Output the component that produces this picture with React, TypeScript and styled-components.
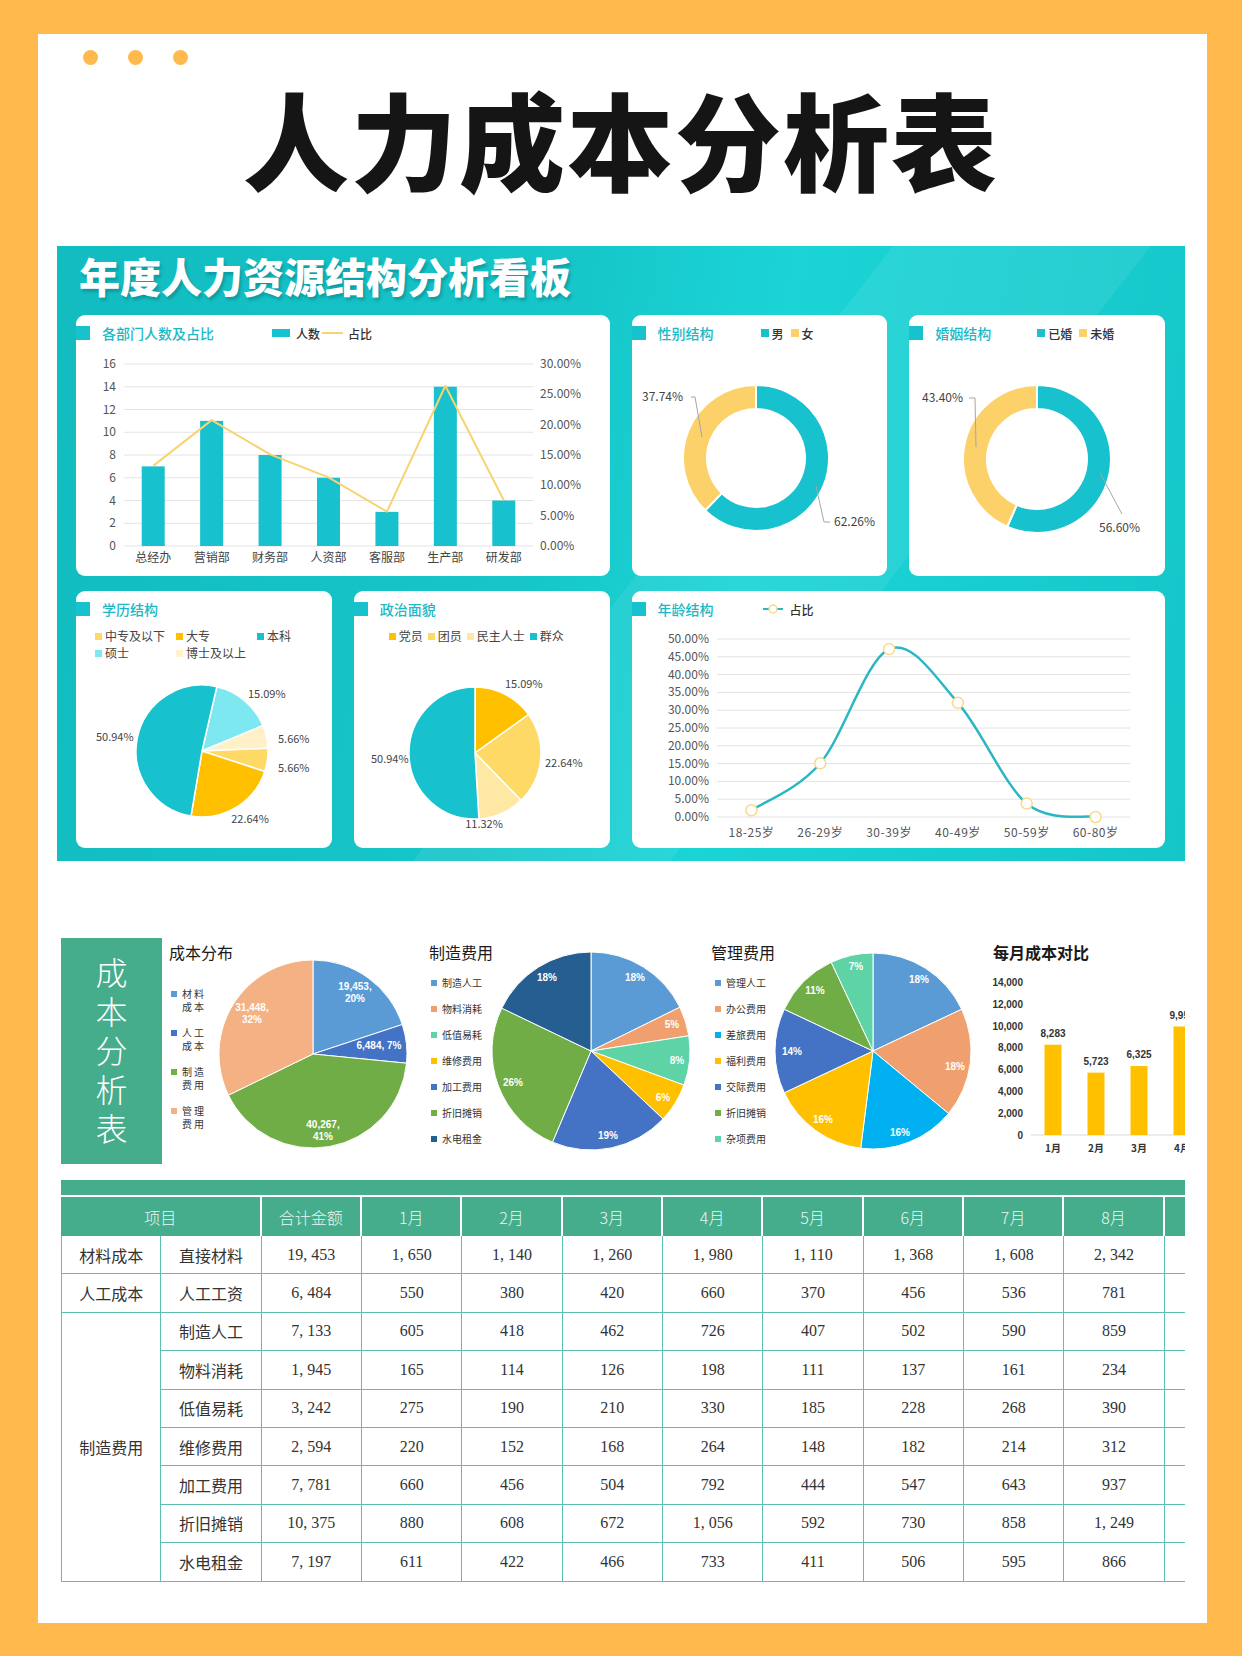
import React from 'react';
import styled, { createGlobalStyle } from 'styled-components';

const TEAL = '#17C1CD';
const SUN = '#FDD169';
const GREEN = '#45AC8C';
const RULE = '#5FBFAE';

const GlobalStyle = createGlobalStyle`
  html, body { margin: 0; padding: 0; }
  body {
    background: #FFB94C;
    font-family: "Noto Sans CJK SC", "Noto Sans", sans-serif;
  }
`;

const Page = styled.div`
  width: 1242px;
  height: 1656px;
  box-sizing: border-box;
  padding: 34px 35px 33px 38px;
  background: #FFB94C;
`;

const Card = styled.div`
  height: 100%;
  box-sizing: border-box;
  background: #fff;
  padding: 0 22px 0 19px;
  overflow: hidden;
`;

const Dots = styled.div`
  display: flex;
  gap: 30px;
  padding: 16px 0 0 26px;
`;

const Dot = styled.span`
  width: 15px;
  height: 15px;
  border-radius: 50%;
  background: #FFB94C;
`;

const Title = styled.h1`
  margin: 19px 0 0;
  text-align: center;
  font-size: 106px;
  line-height: 106px;
  font-weight: 900;
  color: #151515;
  letter-spacing: 2px;
`;

/* ---------- dashboard ---------- */

const Board = styled.section`
  margin-top: 56px;
  height: 615px;
  box-sizing: border-box;
  padding: 0 20px 13px 19px;
  background:
    linear-gradient(128deg, transparent 52%, rgba(255, 255, 255, 0.07) 52%, rgba(255, 255, 255, 0.07) 68%, transparent 68%),
    linear-gradient(100deg, #12BCC0 0%, #16C6C9 42%, #1BD4D6 60%, #15C6C9 100%);
  display: flex;
  flex-direction: column;
`;

const BoardTitle = styled.h2`
  margin: 0;
  height: 69px;
  box-sizing: border-box;
  padding: 9px 0 0 3px;
  font-size: 41px;
  line-height: 41px;
  font-weight: 900;
  color: #fff;
  text-shadow: 2px 3px 3px rgba(0, 90, 100, 0.35);
`;

const PanelGrid = styled.div`
  display: grid;
  grid-template-columns: repeat(4, 1fr);
  grid-template-rows: 261px 257px;
  column-gap: 22px;
  row-gap: 15px;
`;

const Panel = styled.div<{ $span?: number }>`
  grid-column: span ${(p) => p.$span ?? 1};
  background: #fff;
  border-radius: 9px;
  overflow: hidden;
  display: flex;
  flex-direction: column;
`;

const PanelHead = styled.div`
  height: 36px;
  flex-shrink: 0;
  display: flex;
  align-items: center;
`;

const Marker = styled.span`
  width: 14px;
  height: 14px;
  flex-shrink: 0;
  background: ${TEAL};
`;

const PanelTitle = styled.span<{ $w: number }>`
  width: ${(p) => p.$w}px;
  margin-left: 12px;
  flex-shrink: 0;
  font-size: 14px;
  font-weight: 500;
  color: #1DB8C6;
  white-space: nowrap;
`;

const HeadLegend = styled.div<{ $gap?: number }>`
  display: flex;
  align-items: center;
  gap: ${(p) => p.$gap ?? 7}px;
  font-size: 12px;
  color: #333;
  font-weight: 500;
`;

const LegendItem = styled.span`
  display: inline-flex;
  align-items: center;
  white-space: nowrap;
`;

const Swatch = styled.i<{ $c: string; $w?: number; $h?: number; $gap?: number }>`
  display: inline-block;
  width: ${(p) => p.$w ?? 8}px;
  height: ${(p) => p.$h ?? 8}px;
  margin-right: ${(p) => p.$gap ?? 3}px;
  background: ${(p) => p.$c};
`;

const SubLegend = styled.div<{ $cols?: number; $left: number }>`
  height: 36px;
  flex-shrink: 0;
  box-sizing: border-box;
  padding: 1px 0 0 ${(p) => p.$left}px;
  display: ${(p) => (p.$cols ? 'grid' : 'flex')};
  grid-template-columns: repeat(${(p) => p.$cols ?? 1}, 76px);
  align-content: start;
  align-items: flex-start;
  column-gap: 5px;
  row-gap: 1px;
  font-size: 12px;
  line-height: 16px;
  color: #444;
`;

const ChartSvg = styled.svg`
  display: block;
  flex-shrink: 0;
  overflow: visible;
  font-family: "Noto Sans CJK SC", sans-serif;
`;

const T = styled.text<{ $size?: number; $bold?: boolean; $fill?: string; $sans?: boolean }>`
  font-size: ${(p) => p.$size ?? 12}px;
  font-weight: ${(p) => (p.$bold ? 700 : 400)};
  fill: ${(p) => p.$fill ?? '#555'};
  font-family: ${(p) => (p.$sans ? '"Liberation Sans", Arial, sans-serif' : '"Noto Sans CJK SC", sans-serif')};
`;

/* ---------- geometry helpers ---------- */

const pt = (cx: number, cy: number, r: number, a: number): [number, number] => {
  const t = (a * Math.PI) / 180;
  return [cx + r * Math.sin(t), cy - r * Math.cos(t)];
};

const wedge = (cx: number, cy: number, r: number, ri: number, a0: number, a1: number) => {
  const lg = a1 - a0 > 180 ? 1 : 0;
  const [x0, y0] = pt(cx, cy, r, a0);
  const [x1, y1] = pt(cx, cy, r, a1);
  if (!ri) return `M${cx} ${cy} L${x0} ${y0} A${r} ${r} 0 ${lg} 1 ${x1} ${y1} Z`;
  const [x2, y2] = pt(cx, cy, ri, a1);
  const [x3, y3] = pt(cx, cy, ri, a0);
  return `M${x0} ${y0} A${r} ${r} 0 ${lg} 1 ${x1} ${y1} L${x2} ${y2} A${ri} ${ri} 0 ${lg} 0 ${x3} ${y3} Z`;
};

type Slice = { v: number; c: string };

const Pie = ({ cx, cy, r, ri = 0, start = 0, slices, sw = 1.5 }: { cx: number; cy: number; r: number; ri?: number; start?: number; slices: Slice[]; sw?: number }) => {
  const total = slices.reduce((s, x) => s + x.v, 0);
  let a = start;
  return (
    <g>
      {slices.map((s, i) => {
        const a0 = a;
        const a1 = a + (s.v / total) * 360;
        a = a1;
        return <path key={i} d={wedge(cx, cy, r, ri, a0, a1)} fill={s.c} stroke="#fff" strokeWidth={sw} strokeLinejoin="round" />;
      })}
    </g>
  );
};

const smooth = (pts: [number, number][]) => {
  let d = `M${pts[0][0]} ${pts[0][1]}`;
  for (let i = 0; i < pts.length - 1; i++) {
    const p0 = pts[i - 1] ?? pts[i];
    const p1 = pts[i];
    const p2 = pts[i + 1];
    const p3 = pts[i + 2] ?? p2;
    const c1 = [p1[0] + (p2[0] - p0[0]) / 6, p1[1] + (p2[1] - p0[1]) / 6];
    const c2 = [p2[0] - (p3[0] - p1[0]) / 6, p2[1] - (p3[1] - p1[1]) / 6];
    d += ` C${c1[0]} ${c1[1]} ${c2[0]} ${c2[1]} ${p2[0]} ${p2[1]}`;
  }
  return d;
};

/* ---------- dashboard charts ---------- */

const depts = [
  { name: '总经办', n: 7 },
  { name: '营销部', n: 11 },
  { name: '财务部', n: 8 },
  { name: '人资部', n: 6 },
  { name: '客服部', n: 3 },
  { name: '生产部', n: 14 },
  { name: '研发部', n: 4 },
];

const DeptChart = () => {
  const L = 48, R = 457, TOP = 13, B = 195;
  const H = B - TOP;
  const step = (R - L) / depts.length;
  const total = depts.reduce((s, d) => s + d.n, 0);
  const yN = (v: number) => B - (v / 16) * H;
  const yP = (p: number) => B - (p / 30) * H;
  const line = depts.map((d, i) => `${L + step * (i + 0.5)},${yP((d.n / total) * 100)}`).join(' ');
  return (
    <ChartSvg width={534} height={225}>
      {[0, 2, 4, 6, 8, 10, 12, 14, 16].map((v) => (
        <g key={v}>
          <line x1={L} x2={R} y1={yN(v)} y2={yN(v)} stroke="#E4E4E4" strokeWidth={1} />
          <T x={40} y={yN(v) + 4} textAnchor="end">{v}</T>
        </g>
      ))}
      {[0, 5, 10, 15, 20, 25, 30].map((p) => (
        <T key={p} x={464} y={yP(p) + 4}>{p.toFixed(2)}%</T>
      ))}
      {depts.map((d, i) => (
        <rect key={d.name} x={L + step * (i + 0.5) - 11.5} y={yN(d.n)} width={23} height={B - yN(d.n)} fill={TEAL} />
      ))}
      <polyline points={line} fill="none" stroke="#F7D372" strokeWidth={2} strokeLinejoin="round" />
      {depts.map((d, i) => (
        <T key={d.name} x={L + step * (i + 0.5)} y={211} textAnchor="middle" $fill="#444">{d.name}</T>
      ))}
    </ChartSvg>
  );
};

type DonutLabel = { text: string; x: number; y: number; lead: string };

const DonutChart = ({ cx, cy, ro, ri, parts, labels }: { cx: number; cy: number; ro: number; ri: number; parts: Slice[]; labels: DonutLabel[] }) => (
  <ChartSvg width={256} height={225}>
    <Pie cx={cx} cy={cy} r={ro} ri={ri} slices={parts} sw={2} />
    {labels.map((l) => (
      <g key={l.text}>
        <polyline points={l.lead} fill="none" stroke="#A6A6A6" strokeWidth={1} />
        <T x={l.x} y={l.y} $fill="#444">{l.text}</T>
      </g>
    ))}
  </ChartSvg>
);

type PieLabel = { text: string; x: number; y: number; mid?: boolean };

const SmallPie = ({ cx, cy, start, parts, labels }: { cx: number; cy: number; start: number; parts: Slice[]; labels: PieLabel[] }) => (
  <ChartSvg width={256} height={185}>
    <Pie cx={cx} cy={cy} r={66} start={start} slices={parts} />
    {labels.map((l, i) => (
      <T key={i} x={l.x} y={l.y} textAnchor={l.mid ? 'middle' : 'start'} $size={11} $fill="#444">{l.text}</T>
    ))}
  </ChartSvg>
);

const ages = [
  { name: '18-25岁', v: 1.89 },
  { name: '26-29岁', v: 15.09 },
  { name: '30-39岁', v: 47.17 },
  { name: '40-49岁', v: 32.08 },
  { name: '50-59岁', v: 3.77 },
  { name: '60-80岁', v: 0 },
];

const AgeChart = () => {
  const L = 85, R = 498, TOP = 12, B = 190;
  const step = (R - L) / ages.length;
  const y = (v: number) => B - (v / 50) * (B - TOP);
  const pts = ages.map((a, i) => [L + step * (i + 0.5), y(a.v)] as [number, number]);
  return (
    <ChartSvg width={534} height={221}>
      {[0, 5, 10, 15, 20, 25, 30, 35, 40, 45, 50].map((v) => (
        <g key={v}>
          <line x1={L} x2={R} y1={y(v)} y2={y(v)} stroke="#E2E2E2" strokeWidth={1} />
          <T x={77} y={y(v) + 4} textAnchor="end">{v.toFixed(2)}%</T>
        </g>
      ))}
      <path d={smooth(pts)} fill="none" stroke="#2BB6C2" strokeWidth={2.5} />
      {pts.map(([px, py], i) => (
        <circle key={i} cx={px} cy={py} r={5.5} fill="#fff" stroke="#F6DA8C" strokeWidth={1.5} />
      ))}
      {ages.map((a, i) => (
        <T key={a.name} x={L + step * (i + 0.5)} y={210} textAnchor="middle" letterSpacing={0.5}>{a.name}</T>
      ))}
    </ChartSvg>
  );
};

/* ---------- cost section ---------- */

const CostRow = styled.section`
  margin: 77px 0 0 4px;
  height: 226px;
  display: flex;
  overflow: hidden;
`;

const SideLabel = styled.div`
  width: 101px;
  flex-shrink: 0;
  background: ${GREEN};
  color: #fff;
  display: flex;
  align-items: center;
  justify-content: center;
  writing-mode: vertical-rl;
  text-orientation: upright;
  font-size: 32px;
  font-weight: 300;
  letter-spacing: 7px;
  padding-top: 6px;
  box-sizing: border-box;
`;

const CostBlock = styled.div<{ $w: number }>`
  width: ${(p) => p.$w}px;
  flex-shrink: 0;
  display: flex;
`;

const CostSide = styled.div<{ $w: number; $pad: number }>`
  width: ${(p) => p.$w}px;
  flex-shrink: 0;
  box-sizing: border-box;
  padding-left: ${(p) => p.$pad}px;
  display: flex;
  flex-direction: column;
`;

const CostColumn = styled.div`
  display: flex;
  flex-direction: column;
`;

const CostTitle = styled.div<{ $bold?: boolean; $pad?: number }>`
  padding: 4px 0 0 ${(p) => p.$pad ?? 0}px;
  height: 28px;
  box-sizing: border-box;
  font-size: 16px;
  line-height: 20px;
  font-weight: ${(p) => (p.$bold ? 700 : 400)};
  color: #1a1a1a;
  white-space: nowrap;
`;

const CostLegend = styled.div<{ $top: number; $gap: number; $ml: number }>`
  display: flex;
  flex-direction: column;
  gap: ${(p) => p.$gap}px;
  margin: ${(p) => p.$top}px 0 0 ${(p) => p.$ml}px;
`;

const CostItem = styled.div<{ $ls?: number; $lh: number }>`
  display: flex;
  align-items: flex-start;
  font-size: 10px;
  line-height: ${(p) => p.$lh}px;
  letter-spacing: ${(p) => p.$ls ?? 0}px;
  color: #333;
  white-space: nowrap;
`;

const CostSwatch = styled.i<{ $c: string; $top: number }>`
  display: inline-block;
  width: 6px;
  height: 6px;
  margin: ${(p) => p.$top}px 5px 0 0;
  background: ${(p) => p.$c};
  flex-shrink: 0;
`;

const Wrap2 = styled.span`
  width: 25px;
  white-space: normal;
`;

type CostLabel = { lines: string[]; x: number; y: number };

const CostPie = ({ w, cx, cy, r, slices, labels }: { w: number; cx: number; cy: number; r: number; slices: Slice[]; labels: CostLabel[] }) => (
  <ChartSvg width={w} height={226}>
    <Pie cx={cx} cy={cy} r={r} slices={slices} sw={1} />
    {labels.map((l, i) => (
      <T key={i} x={l.x} y={l.y + 4 - (l.lines.length - 1) * 6} textAnchor="middle" $size={10} $bold $sans $fill="#fff">
        {l.lines.map((s, j) => (
          <tspan key={j} x={l.x} dy={j ? 12 : 0}>{s}</tspan>
        ))}
      </T>
    ))}
  </ChartSvg>
);

const costParts = [
  { name: '材料成本', c: '#5B9BD5', v: 19453 },
  { name: '人工成本', c: '#4472C4', v: 6484 },
  { name: '制造费用', c: '#70AD47', v: 40267 },
  { name: '管理费用', c: '#F4B183', v: 31448 },
];

const makeParts = [
  { name: '制造人工', c: '#5B9BD5', v: 7133 },
  { name: '物料消耗', c: '#F0A06E', v: 1945 },
  { name: '低值易耗', c: '#5DD3A6', v: 3242 },
  { name: '维修费用', c: '#FFC000', v: 2594 },
  { name: '加工费用', c: '#4472C4', v: 7781 },
  { name: '折旧摊销', c: '#70AD47', v: 10375 },
  { name: '水电租金', c: '#255E91', v: 7197 },
];

const adminParts = [
  { name: '管理人工', c: '#5B9BD5', v: 18 },
  { name: '办公费用', c: '#F0A06E', v: 18 },
  { name: '差旅费用', c: '#00B0F0', v: 16 },
  { name: '福利费用', c: '#FFC000', v: 16 },
  { name: '交际费用', c: '#4472C4', v: 14 },
  { name: '折旧摊销', c: '#70AD47', v: 11 },
  { name: '杂项费用', c: '#5DD3A6', v: 7 },
];

const monthly = [
  { m: '1月', v: 8283 },
  { m: '2月', v: 5723 },
  { m: '3月', v: 6325 },
  { m: '4月', v: 9954 },
];

const MonthChart = () => {
  const B = 169;
  const y = (v: number) => B - (v / 2000) * 21.8;
  return (
    <ChartSvg width={240} height={198}>
      {[0, 2000, 4000, 6000, 8000, 10000, 12000, 14000].map((v) => (
        <T key={v} x={38} y={y(v) + 3.5} textAnchor="end" $size={10} $bold $sans $fill="#333">{v.toLocaleString('en-US')}</T>
      ))}
      <line x1={46} x2={240} y1={B} y2={B} stroke="#D9D9D9" strokeWidth={1} />
      {monthly.map((d, i) => (
        <g key={d.m}>
          <rect x={68 + 43 * i - 8.5} y={y(d.v)} width={17} height={B - y(d.v)} fill="#FFC000" />
          <T x={68 + 43 * i} y={y(d.v) - 8} textAnchor="middle" $size={10} $bold $sans $fill="#333">{d.v.toLocaleString('en-US')}</T>
          <T x={68 + 43 * i} y={186} textAnchor="middle" $size={10} $bold $fill="#333">{d.m}</T>
        </g>
      ))}
    </ChartSvg>
  );
};

/* ---------- table ---------- */

const TableWrap = styled.div`
  margin: 16px 0 0 4px;
  overflow: hidden;
`;

const Band = styled.div`
  height: 15px;
  background: ${GREEN};
  margin-bottom: 2px;
`;

const Sheet = styled.table`
  border-collapse: separate;
  border-spacing: 0;
  table-layout: fixed;
  width: 1204px;
  font-family: "Liberation Serif", "Noto Sans CJK SC", serif;
`;

const Col = styled.col`
  width: 100.3px;
`;

const Th = styled.th`
  height: 39px;
  padding: 0;
  background: ${GREEN};
  color: #EAF7F2;
  font-weight: 300;
  font-size: 16px;
  font-family: "Noto Sans CJK SC", sans-serif;
  border-right: 2px solid #fff;
`;

const Td = styled.td<{ $edge?: boolean }>`
  box-sizing: border-box;
  height: 38.4px;
  padding: 0;
  text-align: center;
  font-size: 16px;
  color: #333;
  border-right: 1.5px solid ${RULE};
  border-bottom: 1.5px solid ${RULE};
  border-left: ${(p) => (p.$edge ? `1.5px solid ${RULE}` : 'none')};
`;

const months = ['1月', '2月', '3月', '4月', '5月', '6月', '7月', '8月', '9月'];

const tableRows: { group?: string; span?: number; item: string; vals: string[] }[] = [
  { group: '材料成本', span: 1, item: '直接材料', vals: ['19, 453', '1, 650', '1, 140', '1, 260', '1, 980', '1, 110', '1, 368', '1, 608', '2, 342'] },
  { group: '人工成本', span: 1, item: '人工工资', vals: ['6, 484', '550', '380', '420', '660', '370', '456', '536', '781'] },
  { group: '制造费用', span: 7, item: '制造人工', vals: ['7, 133', '605', '418', '462', '726', '407', '502', '590', '859'] },
  { item: '物料消耗', vals: ['1, 945', '165', '114', '126', '198', '111', '137', '161', '234'] },
  { item: '低值易耗', vals: ['3, 242', '275', '190', '210', '330', '185', '228', '268', '390'] },
  { item: '维修费用', vals: ['2, 594', '220', '152', '168', '264', '148', '182', '214', '312'] },
  { item: '加工费用', vals: ['7, 781', '660', '456', '504', '792', '444', '547', '643', '937'] },
  { item: '折旧摊销', vals: ['10, 375', '880', '608', '672', '1, 056', '592', '730', '858', '1, 249'] },
  { item: '水电租金', vals: ['7, 197', '611', '422', '466', '733', '411', '506', '595', '866'] },
];

const CostTable = () => (
  <TableWrap>
    <Band />
    <Sheet>
      <colgroup>
        {Array.from({ length: 12 }).map((_, i) => <Col key={i} />)}
      </colgroup>
      <thead>
        <tr>
          <Th colSpan={2}>项目</Th>
          <Th>合计金额</Th>
          {months.map((m) => <Th key={m}>{m}</Th>)}
        </tr>
      </thead>
      <tbody>
        {tableRows.map((r) => (
          <tr key={r.item}>
            {r.group && <Td $edge rowSpan={r.span}>{r.group}</Td>}
            <Td>{r.item}</Td>
            {r.vals.map((v, i) => <Td key={i}>{v}</Td>)}
            <Td />
          </tr>
        ))}
      </tbody>
    </Sheet>
  </TableWrap>
);

/* ---------- page ---------- */

const App: React.FC = () => (
  <>
    <GlobalStyle />
    <Page>
      <Card>
        <Dots>
          <Dot />
          <Dot />
          <Dot />
        </Dots>
        <Title>人力成本分析表</Title>

        <Board>
          <BoardTitle>年度人力资源结构分析看板</BoardTitle>
          <PanelGrid>
            <Panel $span={2}>
              <PanelHead>
                <Marker />
                <PanelTitle $w={170}>各部门人数及占比</PanelTitle>
                <HeadLegend $gap={2}>
                  <LegendItem><Swatch $c={TEAL} $w={18} $h={8} $gap={6} />人数</LegendItem>
                  <LegendItem><Swatch $c="#F7D372" $w={21} $h={2} $gap={5} />占比</LegendItem>
                </HeadLegend>
              </PanelHead>
              <DeptChart />
            </Panel>

            <Panel>
              <PanelHead>
                <Marker />
                <PanelTitle $w={103}>性别结构</PanelTitle>
                <HeadLegend>
                  <LegendItem><Swatch $c={TEAL} />男</LegendItem>
                  <LegendItem><Swatch $c={SUN} />女</LegendItem>
                </HeadLegend>
              </PanelHead>
              <DonutChart
                cx={124}
                cy={107}
                ro={73}
                ri={49}
                parts={[{ v: 62.26, c: TEAL }, { v: 37.74, c: SUN }]}
                labels={[
                  { text: '37.74%', x: 10, y: 50, lead: '59,46 63,46 70,86' },
                  { text: '62.26%', x: 202, y: 175, lead: '184,135 192,171 198,171' },
                ]}
              />
            </Panel>

            <Panel>
              <PanelHead>
                <Marker />
                <PanelTitle $w={102}>婚姻结构</PanelTitle>
                <HeadLegend>
                  <LegendItem><Swatch $c={TEAL} />已婚</LegendItem>
                  <LegendItem><Swatch $c={SUN} />未婚</LegendItem>
                </HeadLegend>
              </PanelHead>
              <DonutChart
                cx={128}
                cy={108}
                ro={74}
                ri={50}
                parts={[{ v: 56.6, c: TEAL }, { v: 43.4, c: SUN }]}
                labels={[
                  { text: '43.40%', x: 13, y: 51, lead: '60,47 66,47 67,96' },
                  { text: '56.60%', x: 190, y: 181, lead: '191,122 213,163' },
                ]}
              />
            </Panel>

            <Panel>
              <PanelHead>
                <Marker />
                <PanelTitle $w={100}>学历结构</PanelTitle>
              </PanelHead>
              <SubLegend $cols={3} $left={19}>
                <LegendItem><Swatch $c="#FFD966" $w={7} $h={7} />中专及以下</LegendItem>
                <LegendItem><Swatch $c="#FFC000" $w={7} $h={7} />大专</LegendItem>
                <LegendItem><Swatch $c={TEAL} $w={7} $h={7} />本科</LegendItem>
                <LegendItem><Swatch $c="#7DE8F0" $w={7} $h={7} />硕士</LegendItem>
                <LegendItem><Swatch $c="#FFF2CC" $w={7} $h={7} />博士及以上</LegendItem>
              </SubLegend>
              <SmallPie
                cx={126}
                cy={88}
                start={13}
                parts={[
                  { v: 15.09, c: '#7DE8F0' },
                  { v: 5.66, c: '#FFF0C8' },
                  { v: 5.66, c: '#FFD966' },
                  { v: 22.64, c: '#FFC000' },
                  { v: 50.94, c: TEAL },
                ]}
                labels={[
                  { text: '15.09%', x: 172, y: 35 },
                  { text: '5.66%', x: 202, y: 80 },
                  { text: '5.66%', x: 202, y: 109 },
                  { text: '50.94%', x: 20, y: 78 },
                  { text: '22.64%', x: 174, y: 160, mid: true },
                ]}
              />
            </Panel>

            <Panel>
              <PanelHead>
                <Marker />
                <PanelTitle $w={100}>政治面貌</PanelTitle>
              </PanelHead>
              <SubLegend $left={35}>
                <LegendItem><Swatch $c="#FFC000" $w={7} $h={7} />党员</LegendItem>
                <LegendItem><Swatch $c="#FFD966" $w={7} $h={7} />团员</LegendItem>
                <LegendItem><Swatch $c="#FFE8A3" $w={7} $h={7} />民主人士</LegendItem>
                <LegendItem><Swatch $c={TEAL} $w={7} $h={7} />群众</LegendItem>
              </SubLegend>
              <SmallPie
                cx={121}
                cy={90}
                start={0}
                parts={[
                  { v: 15.09, c: '#FFC000' },
                  { v: 22.64, c: '#FFD966' },
                  { v: 11.32, c: '#FFE8A3' },
                  { v: 50.94, c: TEAL },
                ]}
                labels={[
                  { text: '15.09%', x: 151, y: 25 },
                  { text: '22.64%', x: 191, y: 104 },
                  { text: '11.32%', x: 130, y: 165, mid: true },
                  { text: '50.94%', x: 17, y: 100 },
                ]}
              />
            </Panel>

            <Panel $span={2}>
              <PanelHead>
                <Marker />
                <PanelTitle $w={105}>年龄结构</PanelTitle>
                <HeadLegend>
                  <LegendItem>
                    <svg width="20" height="10" style={{ marginRight: 7 }}>
                      <line x1="0" x2="20" y1="5" y2="5" stroke="#2BB6C2" strokeWidth="2" />
                      <circle cx="10" cy="5" r="4" fill="#fff" stroke="#F6DA8C" strokeWidth="1.5" />
                    </svg>
                    占比
                  </LegendItem>
                </HeadLegend>
              </PanelHead>
              <AgeChart />
            </Panel>
          </PanelGrid>
        </Board>

        <CostRow>
          <SideLabel>成本分析表</SideLabel>

          <CostBlock $w={263}>
            <CostSide $w={52} $pad={7}>
              <CostTitle>成本分布</CostTitle>
              <CostLegend $top={21} $gap={13} $ml={2}>
                {costParts.map((p) => (
                  <CostItem key={p.name} $ls={2} $lh={13}>
                    <CostSwatch $c={p.c} $top={3.5} />
                    <Wrap2>{p.name}</Wrap2>
                  </CostItem>
                ))}
              </CostLegend>
            </CostSide>
            <CostPie
              w={211}
              cx={99}
              cy={116}
              r={94}
              slices={costParts}
              labels={[
                { lines: ['19,453,', '20%'], x: 141, y: 54 },
                { lines: ['6,484, 7%'], x: 165, y: 107 },
                { lines: ['40,267,', '41%'], x: 109, y: 192 },
                { lines: ['31,448,', '32%'], x: 38, y: 75 },
              ]}
            />
          </CostBlock>

          <CostBlock $w={280}>
            <CostSide $w={66} $pad={4}>
              <CostTitle>制造费用</CostTitle>
              <CostLegend $top={10} $gap={12} $ml={2}>
                {makeParts.map((p) => (
                  <CostItem key={p.name} $lh={14}>
                    <CostSwatch $c={p.c} $top={4} />
                    {p.name}
                  </CostItem>
                ))}
              </CostLegend>
            </CostSide>
            <CostPie
              w={214}
              cx={100}
              cy={113}
              r={99}
              slices={makeParts}
              labels={[
                { lines: ['18%'], x: 144, y: 39 },
                { lines: ['5%'], x: 181, y: 86 },
                { lines: ['8%'], x: 186, y: 122 },
                { lines: ['6%'], x: 172, y: 159 },
                { lines: ['19%'], x: 117, y: 197 },
                { lines: ['26%'], x: 22, y: 144 },
                { lines: ['18%'], x: 56, y: 39 },
              ]}
            />
          </CostBlock>

          <CostBlock $w={280}>
            <CostSide $w={68} $pad={6}>
              <CostTitle>管理费用</CostTitle>
              <CostLegend $top={10} $gap={12} $ml={4}>
                {adminParts.map((p) => (
                  <CostItem key={p.name} $lh={14}>
                    <CostSwatch $c={p.c} $top={4} />
                    {p.name}
                  </CostItem>
                ))}
              </CostLegend>
            </CostSide>
            <CostPie
              w={212}
              cx={100}
              cy={113}
              r={98}
              slices={adminParts}
              labels={[
                { lines: ['18%'], x: 146, y: 41 },
                { lines: ['18%'], x: 182, y: 128 },
                { lines: ['16%'], x: 127, y: 194 },
                { lines: ['16%'], x: 50, y: 181 },
                { lines: ['14%'], x: 19, y: 113 },
                { lines: ['11%'], x: 42, y: 52 },
                { lines: ['7%'], x: 83, y: 28 },
              ]}
            />
          </CostBlock>

          <CostBlock $w={240}>
            <CostColumn>
              <CostTitle $bold $pad={8}>每月成本对比</CostTitle>
              <MonthChart />
            </CostColumn>
          </CostBlock>
        </CostRow>

        <CostTable />
      </Card>
    </Page>
  </>
);

export default App;
